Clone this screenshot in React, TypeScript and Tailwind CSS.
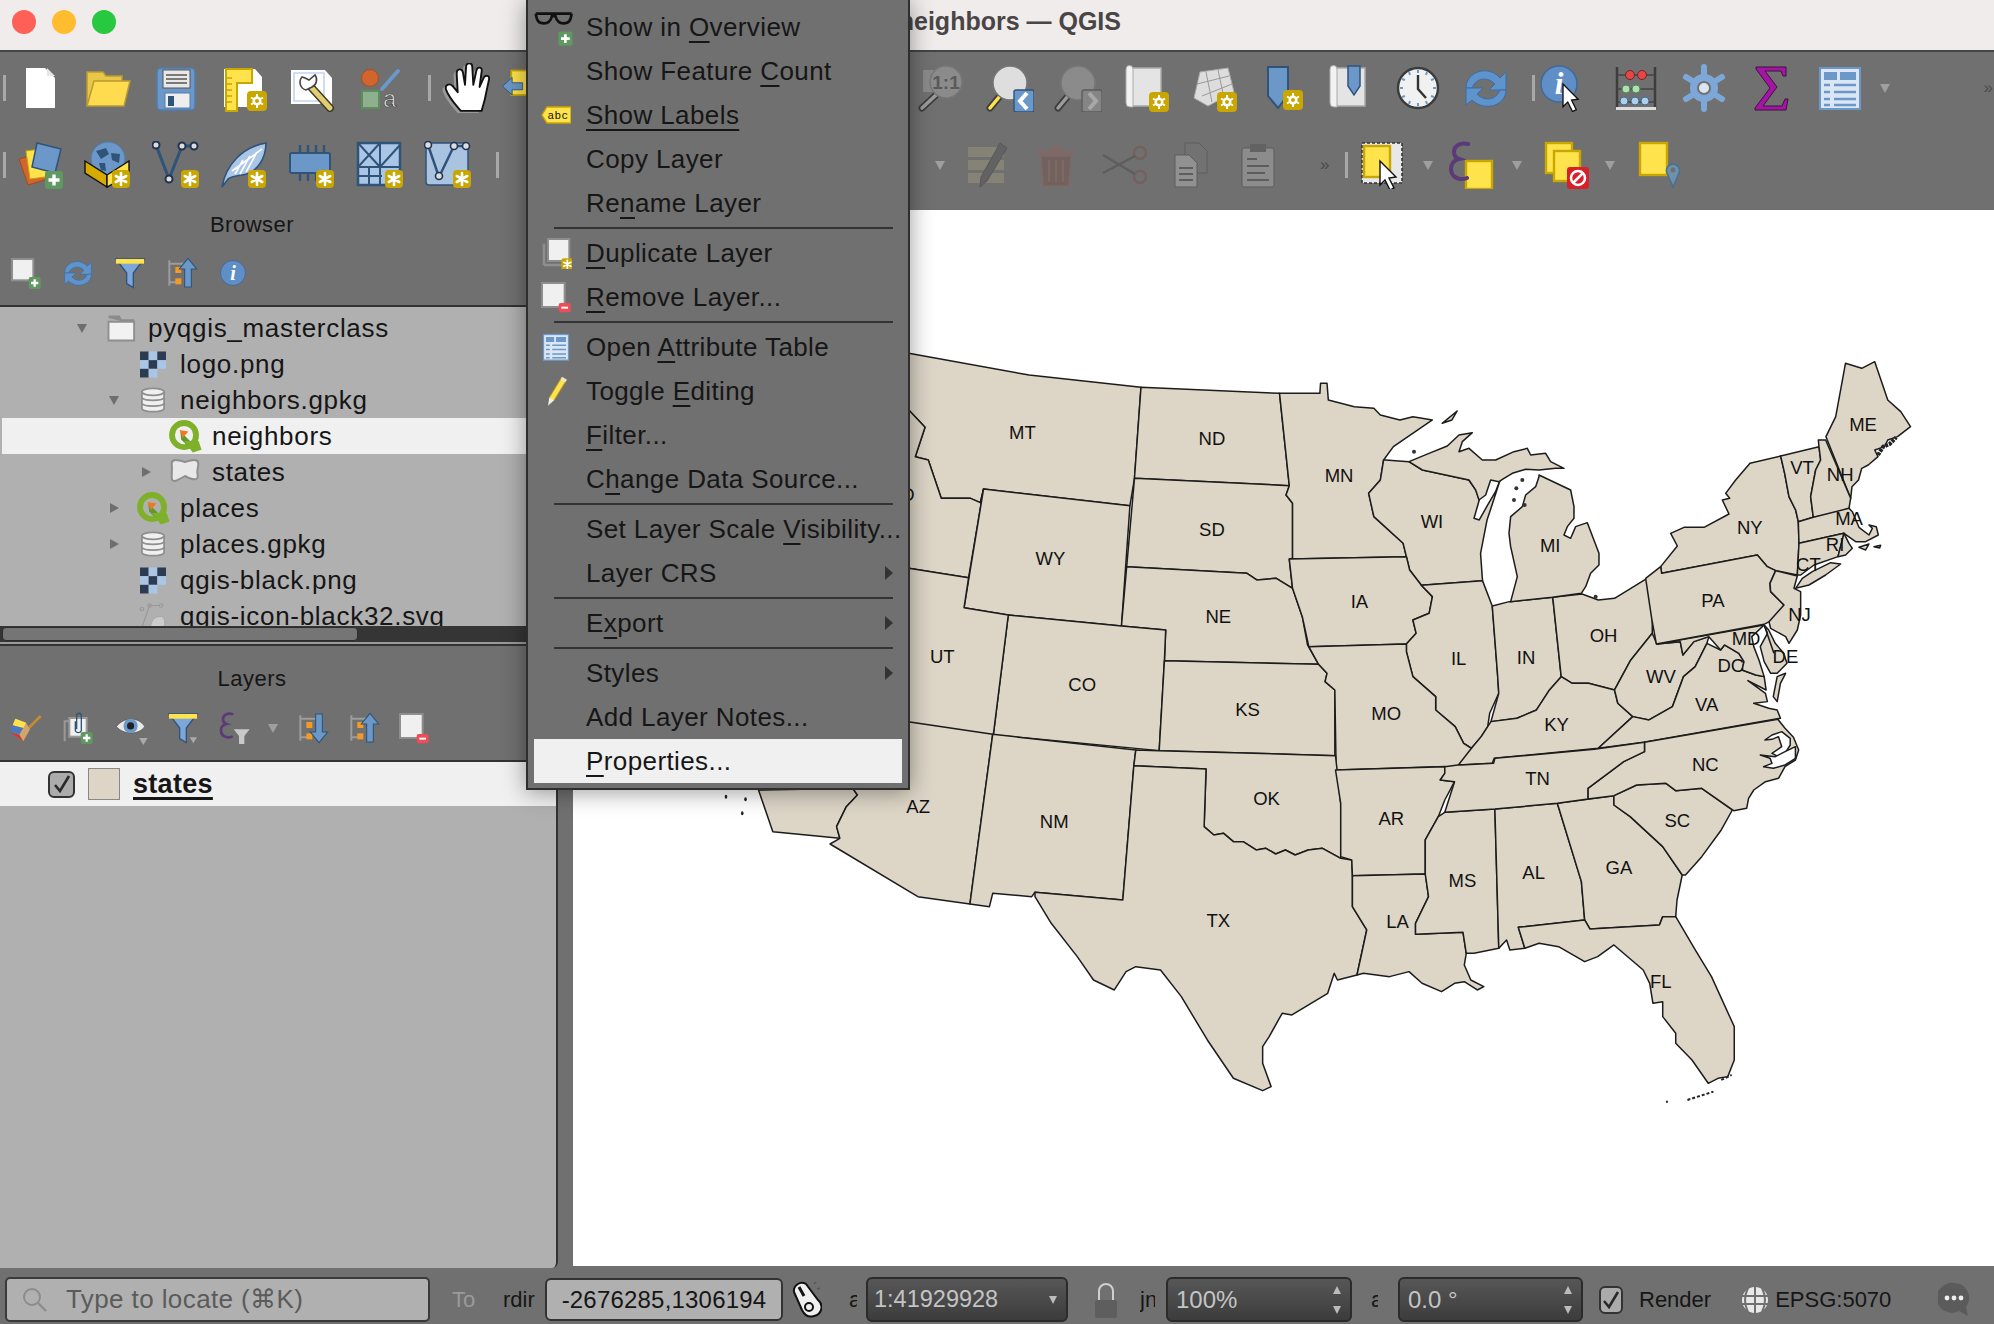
import type { ReactNode } from "react";

const Y = "#ffe34d";
const YD = "#c9a600";
const B = "#6b98c8";
const BD = "#2f5379";

function Ic({ s = 48, children }: { s?: number; children: ReactNode }) {
  return (
    <svg width={s} height={s} viewBox="0 0 48 48" fill="none">
      {children}
    </svg>
  );
}

/* badges */
const Star = ({ x = 29, y = 29 }: { x?: number; y?: number }) => (
  <g transform={`translate(${x} ${y})`}>
    <rect width="18" height="18" rx="4" fill={YD} />
    <path d="M9 3v12M3.8 6l10.4 6M14.2 6L3.8 12" stroke="#fff" strokeWidth="2.6" strokeLinecap="round" />
  </g>
);
const GearB = ({ x = 28, y = 28 }: { x?: number; y?: number }) => (
  <g transform={`translate(${x} ${y})`}>
    <rect width="20" height="20" rx="4" fill={YD} />
    <path d="M10 3v14M4 6.5l12 7M16 6.5l-12 7" stroke="#fff" strokeWidth="2" />
    <circle cx="10" cy="10" r="4.5" fill="#fff" />
    <circle cx="10" cy="10" r="2" fill={YD} />
  </g>
);
const PlusB = ({ x = 29, y = 29, s = 18 }: { x?: number; y?: number; s?: number }) => (
  <g transform={`translate(${x} ${y}) scale(${s / 18})`}>
    <rect width="18" height="18" rx="3" fill="#5f9860" />
    <path d="M9 3.5v11M3.5 9h11" stroke="#fff" strokeWidth="3.4" />
  </g>
);
const MinusB = ({ x = 30, y = 32 }: { x?: number; y?: number }) => (
  <g transform={`translate(${x} ${y})`}>
    <rect width="18" height="14" rx="3" fill="#ee4c57" />
    <path d="M4 7h10" stroke="#fff" strokeWidth="3" />
  </g>
);
const Cursor = ({ x, y, s = 1 }: { x: number; y: number; s?: number }) => (
  <path transform={`translate(${x} ${y}) scale(${s})`} d="M0 0l16 16-7 1 5 10-4 2-5-10-5 5z" fill="#fff" stroke="#111" strokeWidth="1.4" />
);

/* top toolbar */
const NewFile = () => (
  <Ic>
    <path d="M10 4h19l10 10v30H10z" fill="#fff" />
    <path d="M31 4l8 8h-8z" fill="#e6e6e6" />
  </Ic>
);
const OpenFolder = () => (
  <Ic>
    <path d="M3 42V8h16l3 4h16v6" fill="#e8c648" stroke="#b89c33" strokeWidth="1.5" />
    <path d="M3 42l7-25h36l-6 25z" fill="#ffdb50" stroke="#b89c33" strokeWidth="1.5" />
  </Ic>
);
const Save = () => (
  <Ic>
    <rect x="5" y="4" width="38" height="42" rx="4" fill={B} stroke="#4f7cab" strokeWidth="1.5" />
    <rect x="11" y="6" width="27" height="18" fill="#e8e8e8" stroke="#555" />
    <path d="M14 11h21M14 15h21M14 19h21" stroke="#555" strokeWidth="1.4" />
    <rect x="13" y="29" width="25" height="15" fill="#eee" stroke="#4f7cab" />
    <rect x="16" y="32" width="6" height="10" fill={BD} />
  </Ic>
);
const ProjectProps = () => (
  <Ic>
    <path d="M4 5h31l7 8v30H4z" fill="#fff" />
    <path d="M6 5h26v14H17v28H6z" fill={Y} stroke={YD} strokeWidth="2" />
    <path d="M7 14h5M7 20h5M7 26h5M7 32h5M7 38h5" stroke={YD} strokeWidth="1.4" />
    <GearB x={27} y={27} />
  </Ic>
);
const LayoutMgr = () => (
  <Ic>
    <path d="M3 6h34l7 8v26H3z" fill="#fff" />
    <path d="M6 9h30v28H6z" stroke="#c2d4ef" strokeWidth="1.6" />
    <path d="M22 22l20 22" stroke="#3c3c2c" strokeWidth="8" strokeLinecap="round" />
    <path d="M22 22l20 22" stroke="#e3cd72" strokeWidth="5" strokeLinecap="round" />
    <path d="M14 13a8 8 0 0 0 4 13l6-3a8 8 0 0 0 3-12l-6 5-4-2z" fill="#fff" stroke="#444" strokeWidth="1.6" />
  </Ic>
);
const StyleIc = () => (
  <Ic>
    <circle cx="14" cy="14" r="8.5" fill="#d0652e" stroke="#a94e20" />
    <path d="M26 25L42 7" stroke={B} strokeWidth="4" strokeLinecap="round" />
    <rect x="6" y="27" width="17" height="17" fill="#8fb08f" stroke="#5b8f5b" strokeWidth="2" />
    <text x="27" y="43" fontSize="24" fontFamily="Liberation Sans" fill="#e2e2e2" stroke="#444" strokeWidth=".7">a</text>
  </Ic>
);
const HandIc = () => (
  <Ic s={50}>
    <path d="M20 47C15 41 9 35 6 27c-2-5 3-7 6-4l5 6-1-18c0-5 5-5 6-1l2 12 1-17c0-5 6-5 6 0l1 17 3-14c1-4 6-3 5 1l-2 15 4-9c2-3 6-2 5 2l-3 14c-1 7-3 11-4 16z" fill="#9a9a9a" transform="translate(-3 1)" />
    <path d="M20 46C15 40 9 34 6 26c-2-5 3-7 6-4l5 6-1-18c0-5 5-5 6-1l2 12 1-17c0-5 6-5 6 0l1 17 3-14c1-4 6-3 5 1l-2 15 4-9c2-3 6-2 5 2l-3 14c-1 7-3 11-4 16z" fill="#fff" stroke="#111" strokeWidth="1.8" strokeLinejoin="round" />
  </Ic>
);
const PanTo = () => (
  <Ic>
    <rect x="14" y="4" width="30" height="28" fill={Y} stroke={YD} strokeWidth="2" />
    <path d="M4 22l11-10v6h12v8H15v6z" fill={B} stroke={BD} />
  </Ic>
);
const Glass = ({ x = 24, y = 17, r = 15, c = "#dedede" }: { x?: number; y?: number; r?: number; c?: string }) => (
  <>
    <path d={`M${x - 10} ${y + 13}L4 44`} stroke="#3d3d3d" strokeWidth="7" strokeLinecap="round" />
    <path d={`M${x - 10} ${y + 13}L4 44`} stroke={c === "#dedede" ? Y : "#9b9b9b"} strokeWidth="3.5" strokeLinecap="round" />
    <circle cx={x} cy={y} r={r} fill={c} stroke="#777" strokeWidth="1.5" />
  </>
);
const Zoom11 = () => (
  <Ic>
    <rect x="5" y="6" width="22" height="22" fill="#8a8a8a" />
    <Glass x={28} y={18} r={16} c="#8b8b8b" />
    <text x="28" y="25" fontSize="19" fontWeight="700" textAnchor="middle" fontFamily="Liberation Sans" fill="#5a5a5a">1:1</text>
  </Ic>
);
const ZoomLast = () => (
  <Ic>
    <Glass x={24} y={19} r={17} />
    <rect x="28" y="26" width="20" height="22" rx="2" fill={B} stroke={BD} strokeWidth="1.4" />
    <path d="M41 29l-7 8 7 8" stroke="#fff" strokeWidth="4" />
  </Ic>
);
const ZoomNext = () => (
  <Ic>
    <Glass x={24} y={19} r={17} c="#8b8b8b" />
    <rect x="28" y="26" width="20" height="22" rx="2" fill="#858585" stroke="#5c5c5c" strokeWidth="1.4" />
    <path d="M35 29l7 8-7 8" stroke="#a8a8a8" strokeWidth="4" />
  </Ic>
);
const Scroll = () => (
  <>
    <path d="M9 4h30v38H9z" fill="#e4e4e4" stroke="#aaa" strokeWidth="1.5" />
    <path d="M4 5a3 3 0 0 1 7 0v38H8a4 4 0 0 1-4-4z" fill="#f2f2f2" stroke="#aaa" />
  </>
);
const NewMap = () => (
  <Ic>
    <Scroll />
    <GearB x={27} y={28} />
  </Ic>
);
const New3D = () => (
  <Ic>
    <path d="M10 8l28-4 6 24-26 14L4 34z" fill="#ddd" stroke="#aaa" />
    <path d="M7 20l32-8M12 32l30-12M16 8l6 30M28 6l6 28" stroke="#999" />
    <GearB x={27} y={28} />
  </Ic>
);
const NewBookmark = () => (
  <Ic>
    <path d="M10 3h20v28l-10 13-10-12z" fill={B} stroke={BD} strokeWidth="2" />
    <GearB x={25} y={26} />
  </Ic>
);
const ShowBookmarks = () => (
  <Ic>
    <Scroll />
    <path d="M22 2h12v20l-6 9-6-9z" fill={B} stroke={BD} strokeWidth="1.5" />
  </Ic>
);
const Clock = () => (
  <Ic>
    <circle cx="24" cy="24" r="20" fill="#f1f1f1" stroke="#3b3b3b" strokeWidth="2.4" />
    <path d="M24 11v14l8 9" stroke="#333" strokeWidth="2.4" />
    <path d="M24 6v3M24 39v3M6 24h3M39 24h3M15 8l1 3M33 8l-1 3M15 40l1-3M33 40l-1-3M8 15l3 1M40 15l-3 1M8 33l3-1M40 33l-3-1" stroke={B} strokeWidth="2" />
  </Ic>
);
const Refresh = ({ s = 48 }: { s?: number }) => (
  <Ic s={s}>
    <path d="M4 24C4 8 26 0 38 14l6-6v18H27l6-6C25 12 14 14 10 24z" fill="#5f93cc" stroke="#3a6ea6" />
    <path d="M44 26c0 16-22 22-34 10l-6 5V24h17l-6 6c8 8 19 6 23-4z" fill="#5f93cc" stroke="#3a6ea6" />
  </Ic>
);
const InfoCircle = ({ s = 48, cur = false }: { s?: number; cur?: boolean }) => (
  <Ic s={s}>
    <circle cx={cur ? 20 : 24} cy={cur ? 20 : 24} r={cur ? 18 : 20} fill="#5f8fc6" stroke="#41699a" strokeWidth="1.5" />
    <text x={cur ? 20 : 24} y={cur ? 30 : 35} fontSize={cur ? 31 : 32} fontWeight="700" fontStyle="italic" textAnchor="middle" fontFamily="Liberation Serif" fill="#fff">i</text>
    {cur && <Cursor x={24} y={20} s={0.95} />}
  </Ic>
);
const Abacus = () => (
  <Ic>
    <path d="M5 3v42M43 3v42" stroke="#3d3d3d" strokeWidth="2.5" />
    <path d="M5 11h38M5 25h38M5 38h38" stroke="#444" strokeWidth="1.5" />
    <circle cx="18" cy="11" r="4.5" fill="#e34848" stroke="#7d1f1f" />
    <circle cx="30" cy="11" r="4.5" fill="#e34848" stroke="#7d1f1f" />
    <circle cx="14" cy="25" r="4" fill="#b3e0a8" stroke="#486" />
    <circle cx="24" cy="25" r="4" fill="#b3e0a8" stroke="#486" />
    <circle cx="12" cy="37" r="4" fill="#a9d0ec" stroke="#468" />
    <circle cx="23" cy="37" r="4" fill="#a9d0ec" stroke="#468" />
    <circle cx="33" cy="37" r="4" fill="#a9d0ec" stroke="#468" />
    <rect x="4" y="43" width="40" height="3" fill="#ddd" />
  </Ic>
);
const Gear = () => (
  <Ic>
    <path d="M24 3v42M6 13l36 22M42 13L6 35" stroke="#7ea7d9" strokeWidth="6" strokeLinecap="round" />
    <circle cx="24" cy="24" r="14" fill="#7ea7d9" />
    <circle cx="24" cy="24" r="7" fill="#707070" />
    <circle cx="24" cy="24" r="5" fill="#dce6f3" />
  </Ic>
);
const Sigma = () => (
  <Ic>
    <path d="M8 3h30v9h-3l-2-5H17l12 16-14 19h19l3-7h3l-2 11H7v-2l15-20L8 5z" fill="#a316a3" stroke="#3f103f" strokeWidth="1" />
  </Ic>
);
const TableIc = ({ s = 48 }: { s?: number }) => (
  <Ic s={s}>
    <rect x="4" y="4" width="40" height="41" fill="#dbe6f4" stroke={B} strokeWidth="2" />
    <rect x="8" y="8" width="13" height="8" fill={B} />
    <rect x="24" y="8" width="16" height="8" fill={B} />
    <path d="M8 21h6M18 21h22M8 28h6M18 28h22M8 35h6M18 35h22M8 41h6M18 41h22" stroke={B} strokeWidth="2.4" />
  </Ic>
);
const Dots = () => <span className="text-[17px] leading-none text-[#4b4b4b] tracking-[-1px]">»</span>;
const Dd = () => <span className="block w-0 h-0 border-l-[5px] border-r-[5px] border-t-[9px] border-l-transparent border-r-transparent border-t-[#9f9f9f]" />;

const DataSource = () => (
  <Ic>
    <path d="M3 18l22-6 7 26-20 6z" fill="#d2652f" stroke="#a04b20" />
    <path d="M10 10l22-3 4 28-22 3z" fill={Y} stroke={YD} />
    <path d="M21 2l24 6-6 24-23-6z" fill={B} stroke={BD} strokeWidth="1.5" />
    <PlusB x={29} y={30} />
  </Ic>
);
const NewGpkg = () => (
  <Ic>
    <circle cx="24" cy="18" r="17" fill={B} stroke="#4d7cae" />
    <path d="M12 10l10-3 3 6-8 5zM27 12l9 1-1 9-7-3zM15 22l6 0 1 8-5-1z" fill={BD} />
    <path d="M1 20l22 14v12L1 32z" fill="#d6aa00" stroke="#111" strokeWidth="1.4" />
    <path d="M23 34l22-14v14L23 46z" fill={Y} stroke="#111" strokeWidth="1.4" />
    <Star x={28} y={29} />
  </Ic>
);
const NewLine = () => (
  <Ic>
    <path d="M4 4l13 34L30 5h16" stroke={BD} strokeWidth="3" />
    {[[4, 4], [17, 38], [30, 5], [42, 5]].map(([x, y]) => (
      <circle key={x} cx={x} cy={y} r="3.5" fill="#ddd" stroke="#1f3350" strokeWidth="2" />
    ))}
    <Star x={29} y={29} />
  </Ic>
);
const Feather = () => (
  <Ic>
    <path d="M2 46C6 24 22 6 46 2c0 14-8 30-24 32-6 1-10 1-14 4z" fill="#a9c6e6" stroke={BD} strokeWidth="1.6" />
    <path d="M12 30L42 8M15 33l8-14M20 33l10-18M26 31l10-18" stroke="#fff" strokeWidth="1.6" />
    <Star x={28} y={29} />
  </Ic>
);
const Chip = () => (
  <Ic>
    <path d="M12 4v8M20 4v8M28 4v8M36 4v8M12 32v8M20 32v8M28 32v8" stroke={BD} strokeWidth="2.4" />
    <rect x="2" y="12" width="40" height="20" rx="2" fill={B} stroke={BD} strokeWidth="2" />
    <Star x={28} y={29} />
  </Ic>
);
const Mesh = () => (
  <Ic>
    <rect x="2" y="2" width="42" height="42" fill="#a9c6e6" stroke={BD} strokeWidth="2.5" />
    <path d="M2 26h42M24 2v42M2 2l22 24M24 2L2 26M24 26L44 4M2 35h24M13 26v18" stroke={BD} strokeWidth="2" />
    <Star x={29} y={29} />
  </Ic>
);
const Virtual = () => (
  <Ic>
    <rect x="2" y="2" width="42" height="42" rx="3" fill="#a9c3e0" stroke={BD} strokeWidth="1.5" />
    <path d="M4 4l11 32L30 5h14" stroke={BD} strokeWidth="2.4" />
    {[[4, 4], [15, 35], [30, 5], [42, 5]].map(([x, y]) => (
      <circle key={x} cx={x} cy={y} r="3.5" fill="#ddd" stroke="#1f3350" strokeWidth="1.6" />
    ))}
    <Star x={29} y={29} />
  </Ic>
);
const Muted = ({ children }: { children: ReactNode }) => <span className="opacity-30 flex">{children}</span>;
const EditList = () => (
  <Ic>
    <path d="M4 6h36v10H4zM4 19h36v10H4zM4 32h36v10H4z" fill="#b7ae84" />
    <path d="M36 2l7 5-20 33-7 6 1-10z" fill="#444" stroke="#222" />
  </Ic>
);
const Trash = () => (
  <Ic>
    <path d="M6 10h36v5H6zM18 5h12v5H18z" fill="#a05a50" />
    <path d="M9 15h30l-2 30H11z" fill="#7d3f38" stroke="#a05a50" strokeWidth="1.4" />
    <path d="M17 19v22M24 19v22M31 19v22" stroke="#a05a50" strokeWidth="2" />
  </Ic>
);
const Scissors = () => (
  <Ic>
    <circle cx="40" cy="12" r="6" stroke="#7d3f38" strokeWidth="2.5" />
    <circle cx="40" cy="36" r="6" stroke="#7d3f38" strokeWidth="2.5" />
    <path d="M35 15L3 32M35 33L3 14" stroke="#333" strokeWidth="2.4" />
  </Ic>
);
const CopyIc = () => (
  <Ic>
    <path d="M18 2h14l8 8v22H18z" fill="#777" stroke="#333" />
    <path d="M8 14h14l8 8v24H8z" fill="#ddd" stroke="#333" />
    <path d="M12 27h14M12 33h14M12 39h14" stroke="#333" strokeWidth="2" />
  </Ic>
);
const Paste = () => (
  <Ic>
    <rect x="8" y="7" width="32" height="39" rx="2" fill="#ccc" stroke="#333" />
    <rect x="16" y="3" width="16" height="8" fill="#444" />
    <path d="M13 18h10M13 25h22M13 32h18M13 39h22" stroke="#333" strokeWidth="2" />
  </Ic>
);
const SelectIc = () => (
  <Ic>
    <rect x="3" y="2" width="40" height="40" fill="#e8e8e8" stroke="#333" strokeWidth="1.6" strokeDasharray="3 2" />
    <rect x="5" y="5" width="26" height="31" fill={Y} stroke={YD} strokeWidth="2.4" />
    <Cursor x={21} y={20} />
  </Ic>
);
const EpsPath = ({ c = "#5a3a78" }: { c?: string }) => (
  <path d="M20 3c-8-2-14 2-14 8 0 3 2 6 5 7-5 1-8 5-8 10 0 8 8 12 16 9" stroke={c} strokeWidth="4" strokeLinecap="round" />
);
const SelectExpr = () => (
  <Ic>
    <rect x="18" y="20" width="26" height="28" fill={Y} stroke={YD} strokeWidth="2.4" />
    <EpsPath />
  </Ic>
);
const Deselect = () => (
  <Ic>
    <rect x="3" y="2" width="26" height="30" fill={Y} stroke={YD} strokeWidth="2.4" />
    <rect x="11" y="10" width="26" height="30" fill={Y} stroke={YD} strokeWidth="2.4" />
    <rect x="24" y="26" width="22" height="22" rx="3" fill="#d8202a" />
    <circle cx="35" cy="37" r="7" stroke="#fff" strokeWidth="2.5" />
    <path d="M30 42l10-10" stroke="#fff" strokeWidth="2.5" />
  </Ic>
);
const SelectLoc = () => (
  <Ic>
    <rect x="3" y="2" width="27" height="32" fill={Y} stroke={YD} strokeWidth="2.4" />
    <path d="M36 46l-6-14a6.5 6.5 0 1 1 12 0z" fill="#6d91ad" stroke="#48708f" strokeWidth="1.5" />
    <circle cx="36" cy="29" r="2.5" fill="#707070" />
  </Ic>
);

/* small dock icons */
const NewGroup = () => (
  <Ic s={32}>
    <rect x="3" y="3" width="32" height="32" fill="#f0f0f0" stroke="#8e8e8e" strokeWidth="3" />
    <PlusB x={28} y={30} s={18} />
  </Ic>
);
const Funnel = ({ dd = false }: { dd?: boolean }) => (
  <Ic s={32}>
    <path d="M3 3h42L29 24v22l-10-6V24z" fill="#7ea7d9" stroke={BD} strokeWidth="2" />
    <rect x="3" y="3" width="42" height="7" fill={Y} />
    {dd && <path d="M34 38h11l-5.500 9z" fill="#aaa" />}
  </Ic>
);
const Tree = ({ up }: { up: boolean }) => (
  <Ic s={32}>
    <path d="M5 5v38M5 10h34M5 38h10" stroke="#9c9c9c" strokeWidth="3" />
    <rect x="14" y="15" width="9" height="9" fill="#f59a23" />
    <rect x="14" y="32" width="9" height="9" fill="#f59a23" />
    <path d={up ? "M33 2L46 18h-8v27H28V18h-8z" : "M33 46L46 30h-8V3H28v27h-8z"} fill={B} stroke={BD} strokeWidth="1.6" />
  </Ic>
);
const Broom = () => (
  <Ic s={32}>
    <path d="M46 6L26 26" stroke="#c98b2e" strokeWidth="4" />
    <path d="M8 10l16 6 6 10-10 18-18-14z" fill="#d2a56c" />
    <path d="M8 10l16 6-4 8-16-4z" fill={Y} />
    <path d="M4 20l16 4-6 10-14-4z" fill="#4c78bd" />
    <path d="M0 30l14 4 6 10z" fill="#d8322e" />
  </Ic>
);
const AddGroup = () => (
  <Ic s={32}>
    <path d="M4 44V14h6" stroke="#999" strokeWidth="3" />
    <rect x="11" y="9" width="26" height="28" fill="#f0f0f0" stroke="#999" strokeWidth="3" />
    <path d="M20 14v14a5 5 0 0 0 9 0V4a4 4 0 0 0-7 0v22" stroke={BD} strokeWidth="2" />
    <PlusB x={28} y={30} s={18} />
  </Ic>
);
const Eye = () => (
  <Ic s={34}>
    <path d="M2 22c10-14 32-14 40 0-8 12-30 12-40 0z" fill="#e8e8e8" stroke="#555" />
    <circle cx="22" cy="21" r="10" fill={B} />
    <circle cx="22" cy="21" r="5" fill="#222" />
    <path d="M34 38h12l-6 10z" fill="#aaa" />
  </Ic>
);
const ExprFilter = () => (
  <Ic s={32}>
    <EpsPath />
    <path d="M22 26h24L38 36v12h-8V36z" fill="#c8c8c8" />
  </Ic>
);
const RemoveLayer = ({ s = 32 }: { s?: number }) => (
  <Ic s={s}>
    <rect x="3" y="3" width="34" height="36" fill="#f0f0f0" stroke="#8e8e8e" strokeWidth="3" />
    <MinusB x={28} y={33} />
  </Ic>
);

/* tree icons */
const FolderIc = () => (
  <Ic s={30}>
    <path d="M4 8V4h18l3 6h20v8" fill="#8b8b8b" />
    <path d="M4 14h41v30H4z" fill="#f2f2f2" stroke="#8e8e8e" strokeWidth="3" />
  </Ic>
);
const Raster = () => (
  <svg width="26" height="27" viewBox="0 0 3 3">
    {[
      [0, 0, "#2b3b52"], [1, 0, "#a9c6e6"], [2, 0, "#2b3b52"],
      [0, 1, "#a9c6e6"], [1, 1, "#2b3b52"], [2, 1, "#a9c6e6"],
      [0, 2, "#2b3b52"], [1, 2, "#a9c6e6"],
    ].map(([x, y, c]) => (
      <rect key={`${x}${y}`} x={x as number} y={y as number} width="1" height="1" fill={c as string} />
    ))}
  </svg>
);
const Db = () => (
  <Ic s={28}>
    <path d="M5 10v28c0 8 38 8 38 0V10z" fill="#f0f0f0" stroke="#8e8e8e" strokeWidth="3" />
    <ellipse cx="24" cy="10" rx="19" ry="6" fill="#f0f0f0" stroke="#8e8e8e" strokeWidth="3" />
    <path d="M5 20c4 6 34 6 38 0M5 30c4 6 34 6 38 0" stroke="#8e8e8e" strokeWidth="3" />
  </Ic>
);
const QgisIc = () => (
  <Ic s={35}>
    <circle cx="22" cy="22" r="16.500" stroke="#7fb02a" strokeWidth="8" />
    <path d="M18 18l14 14-5 5-9-9-1 -10z" fill="#5f9a2b" />
    <path d="M22 30l20 0 4 12-12 4z" fill="#7fb02a" />
    <path d="M16 15l12 2-8 9z" fill="#ef7a1a" />
  </Ic>
);
const BlobIc = () => (
  <Ic s={32}>
    <path d="M4 12C4 3 14 6 24 9c10-3 20-6 20 3 0 6-3 10-1 16 2 10-8 8-19 2C14 36 4 42 4 32c0-8 1-14 0-20z" fill="#e8e8e8" stroke="#8e8e8e" strokeWidth="3" strokeLinejoin="round" />
  </Ic>
);
const SvgFile = () => (
  <Ic s={28}>
    <path d="M4 46L18 6h18" stroke="#999" strokeWidth="2" />
    <circle cx="5" cy="12" r="3" stroke="#999" strokeWidth="2" />
    <circle cx="18" cy="6" r="3" stroke="#999" strokeWidth="2" />
    <circle cx="38" cy="6" r="3" stroke="#999" strokeWidth="2" />
    <path d="M20 44c0-14 10-22 22-18 4 8 2 18-2 22z" fill="#ccc" stroke="#999" />
  </Ic>
);

const treeRows = [
  { pad: "pl-[70px]", arrow: "down", icon: <FolderIc />, label: "pyqgis_masterclass" },
  { pad: "pl-[102px]", icon: <Raster />, label: "logo.png" },
  { pad: "pl-[102px]", arrow: "down", icon: <Db />, label: "neighbors.gpkg" },
  { pad: "pl-[132px]", icon: <QgisIc />, label: "neighbors", selected: true },
  { pad: "pl-[134px]", arrow: "right", icon: <BlobIc />, label: "states" },
  { pad: "pl-[102px]", arrow: "right", icon: <QgisIc />, label: "places" },
  { pad: "pl-[102px]", arrow: "right", icon: <Db />, label: "places.gpkg" },
  { pad: "pl-[102px]", icon: <Raster />, label: "qgis-black.png" },
  { pad: "pl-[102px]", icon: <SvgFile />, label: "qgis-icon-black32.svg" },
];

function Slot({ w = "w-[68px]", children }: { w?: string; children?: ReactNode }) {
  return <div className={`${w} h-[68px] shrink-0 flex items-center justify-center`}>{children}</div>;
}
const Sep = ({ m }: { m: string }) => <div className={`${m} w-[3px] h-[26px] shrink-0 bg-[#a8a8a8]`} />;

/* ---- map, traced in the coordinates of a few crops ---- */
const north: string[] = [
  "-60,0 15,40 200,105 372,142 362,415 355,497 130,447 125,488 110,475 65,475 45,360 25,350 40,262 15,210", // MT
  "-60,0 15,210 40,262 25,350 45,360 65,475 110,475 125,488 130,447 107,713 15,685 -60,660", // ID
  "130,447 355,497 342,858 168,825 100,803", // WY
  "372,142 585,160 600,437 362,415", // ND
  "362,415 600,437 595,465 605,490 605,655 600,660 605,745 580,715 550,720 535,700 350,680", // SD
  "350,680 535,700 550,720 580,715 605,745 620,830 628,915 645,973 408,962 410,870 342,858", // NE
  "585,160 647,160 648,130 658,130 660,180 700,200 730,205 740,225 770,240 790,230 820,240 760,320 745,360 740,420 722,460 730,530 775,610 780,650 600,657 605,655 605,490 595,465 600,437", // MN
  "745,360 748,360 784,365 805,390 876,420 887,450 892,480 884,535 892,540 905,495 917,455 925,415 915,475 904,540 902,560 894,640 897,722 803,736 785,690 780,650 775,610 730,530 722,460 740,420", // WI
  "600,657 780,650 785,690 803,736 820,770 815,820 790,840 795,880 780,912 630,920 620,830 605,745", // IA
  "803,736 897,722 912,798 920,1000 922,1060 908,1120 905,1160 895,1190 880,1225 868,1210 855,1160 825,1110 825,1070 790,1010 780,935 780,912 795,880 790,840 815,820 820,770", // IL
  "912,798 938,785 1005,772 1018,1010 1000,1050 980,1110 950,1135 910,1145 922,1060 920,1000", // IN
  "1005,772 1050,762 1075,780 1100,775 1150,715 1158,830 1158,880 1125,960 1100,1050 1060,1030 1035,1030 1018,1010", // OH
  "910,1145 950,1135 980,1110 1000,1050 1018,1010 1035,1030 1060,1030 1100,1050 1105,1090 1128,1130 1075,1225 915,1255 912,1270 860,1275 868,1210 880,1225 895,1190 905,1160", // KY
  "1158,880 1165,912 1201,905 1205,945 1222,905 1245,890 1242,910 1224,980 1206,1010 1189,1100 1153,1140 1128,1130 1105,1090 1100,1050 1125,960", // WV
  "1128,1130 1153,1140 1189,1100 1206,1010 1224,980 1242,910 1263,930 1269,915 1291,940 1299,965 1296,990 1317,1005 1330,1010 1333,1050 1305,1022 1332,1060 1335,1085 1314,1090 1337,1105 1350,1110 1355,1135 1145,1207 1075,1225", // VA
  "1165,912 1330,855 1311,890 1314,920 1322,960 1330,1010 1317,1005 1296,990 1299,965 1291,940 1269,915 1263,930 1245,890 1222,905 1205,945 1201,905", // MD
  "1330,855 1335,880 1324,920 1330,965 1340,1000 1350,1000 1365,970 1360,940 1347,910 1337,870", // delmarva
  "1363,1000 1355,1030 1350,1085 1344,1070 1350,1010", // va shore
  "1425,290 1440,230 1455,70 1480,85 1500,65 1520,180 1540,215 1555,260 1535,290 1520,300 1515,320 1500,330 1505,350 1490,375 1480,385 1475,420 1465,440 1463,475", // ME
  "168,825 342,858 410,870 408,962 400,1232 145,1185", // CO
  "408,962 645,973 658,1000 655,1025 670,1050 670,1247 400,1232", // KS
  "107,713 100,803 168,825 145,1185 15,1148 -60,1120 -60,660 15,685", // UT
  "630,920 780,912 780,935 790,1010 825,1070 825,1110 855,1160 868,1210 880,1225 860,1275 853,1320 840,1280 672,1290 670,1050 655,1025 658,1000 645,973", // MO
  "835,250 858,213 850,240", // isle royale
];
// New York to the Cape, 3x crop at 1640,440
const northeast: string[] = [
  "68,400 65,380 115,318 95,280 135,262 195,262 270,222 250,180 272,175 260,160 290,120 333,70 425,48 437,100 450,170 470,210 478,245 480,310 475,405 410,392 385,380 355,345", // NY
  "470,445 490,415 520,395 575,368 605,372 560,405 510,435", // long island
  "20,415 65,380 68,400 355,345 385,380 410,392 393,430 395,455 435,495 410,535 375,553 52,612 38,535", // PA
  "410,392 475,408 465,445 485,455 485,525 475,570 450,610 440,590 395,565 390,545 435,495 395,455 393,430", // NJ
  "425,48 540,20 545,60 530,90 515,170 523,232 478,245 470,210 450,170 437,100", // VT
  "540,20 538,0 560,0 635,175 630,205 585,222 523,232 515,170 530,90 545,60", // NH
  "478,245 523,232 630,205 640,215 660,262 690,285 700,265 690,255 712,260 718,285 680,305 650,305 615,280 480,310", // MA
  "480,310 615,280 597,350 525,375 485,405 475,405", // CT
  "615,280 630,310 640,325 620,345 597,350", // RI
  "660,322 690,312 680,330", // vineyard
  "705,320 725,316 722,324", // nantucket
];
// Great Lakes, 3x crop at 1380,420
const michigan: string[] = [
  "90,125 150,100 205,78 240,45 280,38 250,65 240,95 270,85 310,120 350,120 405,95 445,85 455,105 500,100 515,125 555,145 530,145 480,150 440,148 400,160 375,175 360,185 335,180 320,225 300,240 290,210 270,180 130,150", // UP
  "480,165 575,210 585,260 585,295 565,320 555,345 575,355 590,320 625,308 660,400 660,435 635,460 620,500 607,520 520,532 395,545 415,470 395,380 390,340 395,290 430,260 440,225 470,200 480,170", // MI
];
const south: string[] = [
  "30,270 175,265 182,285 165,320 150,380 155,415 52,395", // CA
  "100,0 260,65 390,103 355,612 275,590 140,432 155,415 150,380 165,320 182,285 175,265", // AZ
  "390,103 610,150 607,197 590,600 455,577 450,590 390,580 385,620 355,612", // NM
  "610,150 645,152 917,167 925,310 925,475 897,445 875,450 855,465 840,450 825,462 810,445 795,450 775,425 760,425 745,400 730,405 715,380 718,207 607,197", // OK
  "607,197 718,207 715,380 730,405 745,400 760,425 775,425 795,450 810,445 825,462 840,450 855,465 875,450 897,445 925,475 942,480 943,525 943,620 965,690 950,825 920,840 915,820 905,880 850,945 835,940 815,1010 805,1040 805,1090 818,1160 805,1172 760,1135 720,1020 680,890 648,810 610,800 595,815 577,870 545,840 520,770 480,670 455,590 455,577 590,600", // TX
  "917,210 1085,200 1085,220 1078,240 1100,245 1085,300 1075,350 1055,420 1055,522 943,527 942,480 925,470 925,310", // AR
  "943,527 1055,522 1060,590 1040,670 1040,703 1113,697 1118,760 1115,795 1125,840 1145,860 1135,870 1115,845 1100,850 1080,875 1050,850 1030,815 1000,830 960,820 950,825 965,690 943,620", // LA
  "1085,337 1162,327 1168,745 1130,760 1118,760 1113,697 1040,703 1040,670 1060,590 1055,522 1055,420 1075,350", // MS
  "1162,327 1258,310 1295,545 1300,660 1198,682 1208,745 1185,750 1180,720 1168,745", // AL
  "1258,310 1345,287 1345,315 1370,350 1420,440 1450,525 1442,600 1440,650 1420,650 1415,675 1308,687 1300,660 1295,545", // GA
  "1345,287 1380,255 1425,250 1440,272 1480,265 1527,330 1510,390 1480,470 1455,525 1450,525 1420,440 1370,350 1345,315", // SC
  "1392,127 1597,58 1608,85 1621,112 1629,150 1624,180 1608,200 1598,235 1578,245 1560,270 1552,295 1549,325 1529,332 1480,265 1440,272 1425,250 1380,255 1345,287 1305,297 1305,265 1360,185 1392,155", // NC
  "1577,120 1588,105 1603,95 1616,115 1616,135 1608,160 1598,170 1588,160 1603,140 1598,110 1588,118", // albemarle
  "1570,165 1593,170 1608,155 1624,140 1624,175 1608,195 1590,205 1575,200 1588,190 1585,175", // pamlico
  "1110,195 1160,190 1162,175 1315,148 1392,127 1392,155 1360,185 1305,265 1305,297 1258,310 1162,327 1085,337 1100,245 1078,240 1085,220 1085,200 1105,195", // TN
  "1198,682 1300,660 1308,687 1415,675 1420,650 1440,650 1470,750 1495,830 1530,980 1530,1080 1520,1130 1505,1135 1490,1150 1465,1080 1440,1030 1440,1000 1420,950 1420,905 1405,910 1400,850 1390,810 1345,735 1320,770 1300,785 1260,740 1230,730 1208,745", // FL
];
const labels: [string, number, number][] = [
  ["ID", 712, 389], ["MT", 804, 340], ["ND", 953, 345], ["MN", 1053, 374], ["WI", 1126, 410], ["MI", 1219, 429], ["ME", 1465, 334],
  ["VT", 1417, 368], ["NH", 1447, 373], ["MA", 1454, 408], ["NY", 1376, 415], ["RI", 1443, 428], ["CT", 1422, 444], ["PA", 1347, 472],
  ["NJ", 1415, 483], ["SD", 953, 416], ["WY", 826, 439], ["IA", 1069, 473], ["NE", 958, 485], ["OH", 1261, 500], ["MD", 1373, 502],
  ["DE", 1404, 516], ["DC", 1361, 523], ["IL", 1147, 518], ["IN", 1200, 517], ["UT", 741, 516], ["CO", 851, 538], ["WV", 1306, 532],
  ["VA", 1342, 554], ["KS", 981, 558], ["MO", 1090, 561], ["KY", 1224, 570], ["NC", 1341, 601], ["TN", 1209, 612], ["OK", 996, 628],
  ["AZ", 722, 634], ["SC", 1319, 645], ["NM", 829, 646], ["AR", 1094, 644], ["GA", 1273, 682], ["AL", 1206, 686], ["MS", 1150, 692],
  ["TX", 958, 724], ["LA", 1099, 725], ["FL", 1306, 772],
];

const Land = ({ pts, fill = "#ddd6c7" }: { pts: string; fill?: string }) => (
  <polygon points={pts} fill={fill} stroke="#1c1c1c" strokeWidth="1.5" strokeLinejoin="round" vectorEffect="non-scaling-stroke" />
);

function UsMap() {
  return (
    <svg className="absolute left-0 top-0" width="1420" height="1058" viewBox="574 210 1420 1058">
      <g transform="translate(900 340) scale(0.6505 0.3333)">
        {north.map((p) => (
          <Land key={p} pts={p} />
        ))}
        <path d="M1505 345l8-25 10-8 10-20" stroke="#222" strokeWidth="4" vectorEffect="non-scaling-stroke" fill="none" strokeDasharray="3 1" />
        <path d="M1330 855l15 85" stroke="#1c1c1c" strokeWidth="1.5" vectorEffect="non-scaling-stroke" />
      </g>
      <g transform="translate(1640 440) scale(0.3333)">
        {northeast.map((p) => (
          <Land key={p} pts={p} />
        ))}
      </g>
      <g transform="translate(1380 420) scale(0.3333)">
        {michigan.map((p) => (
          <Land key={p} pts={p} />
        ))}
        {[[430, 180], [412, 205], [405, 240], [437, 255], [105, 95], [650, 530]].map(([x, y]) => (
          <circle key={x} cx={x} cy={y} r="6" fill="#333" />
        ))}
      </g>
      <g transform="translate(740 700) scale(0.6505 0.3333)">
        {south.map((p, i) => (
          <Land key={p} pts={p} fill={i === 12 || i === 13 ? "#fff" : "#ddd6c7"} />
        ))}
        {[[10, 298], [5, 340], [-40, 255], [-20, 290]].map(([x, y]) => (
          <ellipse key={x} cx={x} cy={y} rx="2" ry="6" fill="#222" />
        ))}
        <path d="M1425 1205h3M1458 1200l40-25M1510 1140l16-15" stroke="#222" strokeWidth="2" vectorEffect="non-scaling-stroke" fill="none" strokeDasharray="3 2" />
      </g>
      {labels.map(([t, x, y]) => (
        <text key={t} x={x * 1.2717 + 1} y={y * 1.2717 + 6.5} textAnchor="middle" fontSize="18.5" fontFamily="Liberation Sans" fill="#111">
          {t}
        </text>
      ))}
    </svg>
  );
}

/* ---- context menu ---- */
type MI = { a?: string; u?: string; b?: string; icon?: ReactNode; sub?: boolean; active?: boolean; sep?: boolean };
const Glasses = () => (
  <Ic s={44}>
    <path d="M2 9h40M2 9c1 8 3 11 9 11s8-4 9-8h4c1 4 3 8 9 8s8-3 9-11" stroke="#111" strokeWidth="3" fill="none" />
    <PlusB x={27} y={29} s={16} />
  </Ic>
);
const AbcTag = () => (
  <svg width="30" height="18" viewBox="0 0 30 18">
    <path d="M1 9l5-8h24v16H6z" fill={Y} stroke={YD} strokeWidth="1.4" />
    <text x="17" y="13" textAnchor="middle" fontSize="11" fontFamily="Liberation Mono" fill="#111">abc</text>
  </svg>
);
const DupIc = () => (
  <Ic s={32}>
    <path d="M6 42V10M6 42h34" stroke="#8e8e8e" strokeWidth="4" />
    <rect x="12" y="3" width="32" height="33" fill="#f0f0f0" stroke="#8e8e8e" strokeWidth="3" />
    <Star x={32} y={32} />
  </Ic>
);
const PencilIc = () => (
  <Ic s={32}>
    <path d="M33 3l7 4-19 31-7 4 0-8z" fill={Y} stroke="#bfa11a" strokeWidth="1.5" />
    <path d="M14 34l7 4-9 8z" fill="#eee" />
    <path d="M33 3l7 4-2 4-7-4z" fill="#e4e4e4" />
  </Ic>
);
const menu: MI[] = [
  { a: "Show in ", u: "O", b: "verview", icon: <Glasses /> },
  { a: "Show Feature ", u: "C", b: "ount" },
  { u: "Show Labels", icon: <AbcTag /> },
  { a: "Copy Layer" },
  { a: "Re", u: "n", b: "ame Layer" },
  { sep: true },
  { u: "D", b: "uplicate Layer", icon: <DupIc /> },
  { u: "R", b: "emove Layer...", icon: <RemoveLayer s={32} /> },
  { sep: true },
  { a: "Open ", u: "A", b: "ttribute Table", icon: <TableIc s={30} /> },
  { a: "Toggle ", u: "E", b: "diting", icon: <PencilIc /> },
  { u: "F", b: "ilter..." },
  { a: "C", u: "h", b: "ange Data Source..." },
  { sep: true },
  { a: "Set Layer Scale ", u: "V", b: "isibility..." },
  { a: "Layer CRS", sub: true },
  { sep: true },
  { a: "E", u: "x", b: "port", sub: true },
  { sep: true },
  { a: "Styles", sub: true },
  { a: "Add Layer Notes..." },
  { u: "P", b: "roperties...", active: true },
];

function ContextMenu() {
  return (
    <div className="absolute left-[526px] top-0 w-[384px] h-[790px] bg-[#707070] border-2 border-t-0 border-[#2e2e2e] pt-[5px] px-[6px] shadow-[0_2px_22px_rgba(0,0,0,0.4)] text-[26px] tracking-[0.4px] text-[#161616]">
      {menu.map((m, i) =>
        m.sep ? (
          <div key={i} className="h-[6px] flex items-center pl-[20px] pr-[9px]">
            <div className="w-full h-[2px] bg-[#333]" />
          </div>
        ) : (
          <div key={i} className={`h-[44px] flex items-center whitespace-nowrap ${m.active ? "bg-[#f0f0f0]" : ""}`}>
            <span className="w-[52px] shrink-0 flex justify-center items-center pr-[9px]">{m.icon}</span>
            <span>
              {m.a}
              {m.u && <span className="underline underline-offset-[5px] decoration-[1.5px]">{m.u}</span>}
              {m.b}
            </span>
            {m.sub && <span className="ml-auto mr-[9px] w-0 h-0 border-y-[7px] border-l-[8px] border-y-transparent border-l-[#333]" />}
          </div>
        ),
      )}
    </div>
  );
}

function SpinBox({ w, text }: { w: string; text: string }) {
  return (
    <div className={`${w} ml-0 h-[45px] shrink-0 rounded-[6px] border-2 border-[#2b2b2b] bg-gradient-to-b from-[#575757] to-[#3c3c3c] flex items-center pl-[8px] pr-[9px] text-[24px] text-[#c4c4c4]`}>
      <span>{text}</span>
      <span className="ml-auto flex flex-col gap-[12px]">
        <span className="block w-0 h-0 border-x-[4px] border-b-[8px] border-x-transparent border-b-[#bbb]" />
        <span className="block w-0 h-0 border-x-[4px] border-t-[8px] border-x-transparent border-t-[#bbb]" />
      </span>
    </div>
  );
}

function CheckBox({ s }: { s: string }) {
  return (
    <span className={`${s} shrink-0 rounded-[6px] border-2 border-[#333] bg-[#ababab] flex items-center justify-center`}>
      <svg width="20" height="20" viewBox="0 0 20 20" fill="none">
        <path d="M3 11l5 6L17 2" stroke="#2a2a2a" strokeWidth="2.6" />
      </svg>
    </span>
  );
}

export default function App() {
  return (
    <div className="relative w-[1994px] h-[1324px] overflow-hidden flex flex-col bg-[#707070] font-['Liberation_Sans',sans-serif] text-[#161616]">
      {/* title bar */}
      <div className="h-[52px] shrink-0 bg-[#f0ecec] border-b-2 border-[#444] flex items-center">
        <div className="flex gap-[16px] pl-[12px] pb-[6px]">
          <span className="w-[24px] h-[24px] rounded-full bg-[#fe5f57]" />
          <span className="w-[24px] h-[24px] rounded-full bg-[#febc2e]" />
          <span className="w-[24px] h-[24px] rounded-full bg-[#28c840]" />
        </div>
        <span className="ml-auto mr-[873px] pb-[7px] text-[25px] font-bold text-[#4a4545]">neighbors — QGIS</span>
      </div>

      {/* toolbars */}
      <div className="h-[158px] shrink-0 flex flex-col">
        <div className="h-[72px] flex items-center pl-[3px]">
          <div className="w-[3px] h-[26px] bg-[#a8a8a8]" />
          <Slot><NewFile /></Slot>
          <Slot><OpenFolder /></Slot>
          <Slot><Save /></Slot>
          <Slot><ProjectProps /></Slot>
          <Slot><LayoutMgr /></Slot>
          <Slot><StyleIc /></Slot>
          <Sep m="ml-[14px]" />
          <Slot><HandIc /></Slot>
          <Slot w="w-[42px]"><PanTo /></Slot>
          <div className="w-[367px] shrink-0" />
          <Slot><Zoom11 /></Slot>
          <Slot><ZoomLast /></Slot>
          <Slot><ZoomNext /></Slot>
          <Slot><NewMap /></Slot>
          <Slot><New3D /></Slot>
          <Slot><NewBookmark /></Slot>
          <Slot><ShowBookmarks /></Slot>
          <Slot><Clock /></Slot>
          <Slot><Refresh /></Slot>
          <Sep m="ml-[12px]" />
          <Slot w="w-[56px]"><InfoCircle cur /></Slot>
          <div className="w-[11px] shrink-0" />
          <Slot><Abacus /></Slot>
          <Slot><Gear /></Slot>
          <Slot><Sigma /></Slot>
          <Slot><TableIc /></Slot>
          <Slot w="w-[22px]"><Dd /></Slot>
          <div className="ml-auto mr-[2px]"><Dots /></div>
        </div>
        <div className="h-[72px] mt-[5px] flex items-center pl-[3px]">
          <div className="w-[3px] h-[26px] bg-[#a8a8a8]" />
          <Slot><DataSource /></Slot>
          <Slot><NewGpkg /></Slot>
          <Slot><NewLine /></Slot>
          <Slot><Feather /></Slot>
          <Slot><Chip /></Slot>
          <Slot><Mesh /></Slot>
          <Slot><Virtual /></Slot>
          <Sep m="ml-[14px]" />
          <div className="w-[431px] shrink-0" />
          <Slot w="w-[20px]"><Dd /></Slot>
          <div className="w-[4px] shrink-0" />
          <Slot><Muted><EditList /></Muted></Slot>
          <Slot><Muted><Trash /></Muted></Slot>
          <Slot><Muted><Scissors /></Muted></Slot>
          <Slot w="w-[66px]"><Muted><CopyIc /></Muted></Slot>
          <Slot><Muted><Paste /></Muted></Slot>
          <div className="w-[19px] shrink-0 ml-[28px]"><Dots /></div>
          <Sep m="ml-[6px]" />
          <div className="w-[4px] shrink-0" />
          <Slot w="w-[62px]"><SelectIc /></Slot>
          <div className="w-[4px] shrink-0" />
          <Slot w="w-[20px]"><Dd /></Slot>
          <div className="w-[4px] shrink-0" />
          <Slot w="w-[60px]"><SelectExpr /></Slot>
          <div className="w-[3px] shrink-0" />
          <Slot w="w-[24px]"><Dd /></Slot>
          <div className="w-[10px] shrink-0" />
          <Slot w="w-[56px]"><Deselect /></Slot>
          <div className="w-[5px] shrink-0" />
          <Slot w="w-[20px]"><Dd /></Slot>
          <div className="w-[7px] shrink-0" />
          <Slot><SelectLoc /></Slot>
        </div>
      </div>

      {/* body */}
      <div className="flex-1 min-h-0 flex">
        <div className="w-[558px] shrink-0 flex flex-col border-r-2 border-[#333] rounded-br-[6px] overflow-hidden">
          {/* browser dock */}
          <div className="h-[97px] shrink-0 border-b-2 border-[#333] flex flex-col">
            <div className="w-[504px] pt-[1px] text-center text-[22px] tracking-[0.5px] leading-[28px]">Browser</div>
            <div className="flex items-center pl-[10px] gap-[20px] mt-[18px]">
              <NewGroup />
              <Refresh s={32} />
              <Funnel />
              <Tree up />
              <InfoCircle s={30} />
            </div>
          </div>
          <div className="h-[319px] shrink-0 bg-[#b0b0b0] pt-[3px] overflow-hidden text-[26px] tracking-[0.7px]">
            {treeRows.map((r) => (
              <div key={r.label} className={`h-[36px] flex items-center whitespace-nowrap ${r.pad} ${r.selected ? "bg-[#f0f0f0] ml-[2px]" : ""}`}>
                <span className="w-[24px] shrink-0 flex justify-center">
                  {r.arrow === "down" && <span className="block w-0 h-0 border-x-[5px] border-t-[9px] border-x-transparent border-t-[#6e6e6e]" />}
                  {r.arrow === "right" && <span className="block w-0 h-0 border-y-[5px] border-l-[9px] border-y-transparent border-l-[#6e6e6e]" />}
                </span>
                <span className="w-[54px] shrink-0 flex justify-center">{r.icon}</span>
                <span>{r.label}</span>
              </div>
            ))}
          </div>
          <div className="h-[18px] shrink-0 bg-[#353535] border-b-2 border-[#9a9a9a] pt-[1px] pl-[2px]">
            <div className="w-[356px] h-[14px] rounded-[4px] bg-[#757575] border border-[#2c2c2c]" />
          </div>
          {/* layers dock */}
          <div className="h-[118px] shrink-0 border-t-2 border-b-2 border-[#333] flex flex-col">
            <div className="w-[504px] pt-[19px] text-center text-[22px] tracking-[0.5px] leading-[28px]">Layers</div>
            <div className="flex items-center pl-[10px] mt-[18px]">
              <div className="w-[52px]"><Broom /></div>
              <div className="w-[53px]"><AddGroup /></div>
              <div className="w-[52px]"><Eye /></div>
              <div className="w-[52px]"><Funnel dd /></div>
              <div className="w-[29px]"><ExprFilter /></div>
              <div className="w-[49px] flex justify-center"><Dd /></div>
              <div className="w-[51px]"><Tree up={false} /></div>
              <div className="w-[50px]"><Tree up /></div>
              <RemoveLayer />
            </div>
          </div>
          <div className="flex-1 bg-[#b0b0b0]">
            <div className="h-[44px] bg-[#f0f0f0] flex items-center pl-[48px]">
              <CheckBox s="w-[27px] h-[27px]" />
              <span className="ml-[13px] w-[32px] h-[32px] bg-[#ddd6c7] border border-[#888]" />
              <span className="ml-[13px] text-[27px] tracking-[0.3px] font-bold underline underline-offset-[4px] decoration-[3px]">states</span>
            </div>
          </div>
        </div>
        <div className="w-[15px] shrink-0" />
        <div className="relative flex-1 h-[1056px] bg-white">
          <UsMap />
        </div>
      </div>

      {/* status bar */}
      <div className="h-[56px] shrink-0 flex items-center pl-[5px] pt-[7px] text-[22px] whitespace-nowrap">
        <div className="w-[425px] h-[45px] shrink-0 rounded-[5px] border-2 border-[#3a3a3a] bg-[#b0b0b0] flex items-center pl-[14px] text-[26px] tracking-[0.4px] text-[#5b5b5b]">
          <svg width="28" height="28" viewBox="0 0 28 28" fill="none">
            <circle cx="11" cy="11" r="8" stroke="#8c8c8c" strokeWidth="2" />
            <path d="M17 17l8 8" stroke="#8c8c8c" strokeWidth="2.4" />
          </svg>
          <span className="ml-[17px]">Type to locate (⌘K)</span>
        </div>
        <span className="ml-[22px] w-[28px] shrink-0 text-[#9a9a9a]">To</span>
        <span className="ml-[23px] w-[32px] shrink-0 overflow-hidden">rdir</span>
        <div className="ml-[10px] w-[238px] h-[43px] shrink-0 rounded-[6px] border-2 border-[#333] bg-[#b0b0b0] flex items-center justify-center text-[24px] tracking-[0.2px]">-2676285,1306194</div>
        <span className="ml-[7px] w-[32px] shrink-0">
          <svg width="32" height="40" viewBox="0 0 32 40" fill="none">
            <path d="M4 12a8 8 0 0 1 12-8l12 16a9 9 0 0 1-4 16c-6 2-10-2-12-6z" fill="#f0f0f0" stroke="#111" strokeWidth="2" />
            <path d="M9 7l5 9" stroke="#111" strokeWidth="3" />
            <circle cx="19" cy="27" r="4" stroke="#111" strokeWidth="2" />
            <path d="M24 4l2-2M27 9l3-1" stroke="#555" strokeWidth="1.5" />
          </svg>
        </span>
        <span className="ml-[27px] w-[8px] shrink-0 overflow-hidden">a</span>
        <div className="ml-[9px] w-[202px] h-[45px] shrink-0 rounded-[6px] border-2 border-[#2b2b2b] bg-gradient-to-b from-[#575757] to-[#3c3c3c] flex items-center pl-[6px] pr-[9px] text-[23.5px] text-[#c4c4c4]">
          <span>1:41929928</span>
          <span className="ml-auto block w-0 h-0 border-x-[4px] border-t-[8px] border-x-transparent border-t-[#bbb]" />
        </div>
        <span className="ml-[27px] w-[22px] shrink-0">
          <svg width="22" height="36" viewBox="0 0 22 36" fill="none">
            <path d="M4 18V9a7 7 0 0 1 14 0v9" stroke="#cfcfcf" strokeWidth="2" />
            <rect y="18" width="22" height="18" rx="2" fill="#5e5e5e" />
          </svg>
        </span>
        <span className="ml-[23px] w-[15px] shrink-0 overflow-hidden">jn</span>
        <div className="ml-[11px] shrink-0"><SpinBox w="w-[186px]" text="100%" /></div>
        <span className="ml-[19px] w-[7px] shrink-0 overflow-hidden">a</span>
        <div className="ml-[20px] shrink-0"><SpinBox w="w-[185px]" text="0.0 °" /></div>
        <span className="ml-[16px]"><CheckBox s="w-[24px] h-[28px]" /></span>
        <span className="ml-[16px]">Render</span>
        <span className="ml-[30px] w-[27px] shrink-0">
          <svg width="28" height="30" viewBox="0 0 28 30" fill="none">
            <circle cx="14" cy="15" r="13" fill="#e8e8e8" />
            <path d="M1 11h26M1 19h26M14 2v26M7 3c-4 8-4 16 0 24M21 3c4 8 4 16 0 24" stroke="#707070" strokeWidth="2" />
          </svg>
        </span>
        <span className="ml-[7px]">EPSG:5070</span>
        <span className="ml-[47px] w-[32px] shrink-0">
          <svg width="32" height="36" viewBox="0 0 32 36">
            <path d="M16 1a15 15 0 0 1 12 24l2 9-9-5A15 15 0 1 1 16 1z" fill="#5b5b5b" />
            <circle cx="9" cy="16" r="2.4" fill="#eee" />
            <circle cx="16" cy="16" r="2.4" fill="#eee" />
            <circle cx="23" cy="16" r="2.4" fill="#eee" />
          </svg>
        </span>
      </div>

      <ContextMenu />
    </div>
  );
}
